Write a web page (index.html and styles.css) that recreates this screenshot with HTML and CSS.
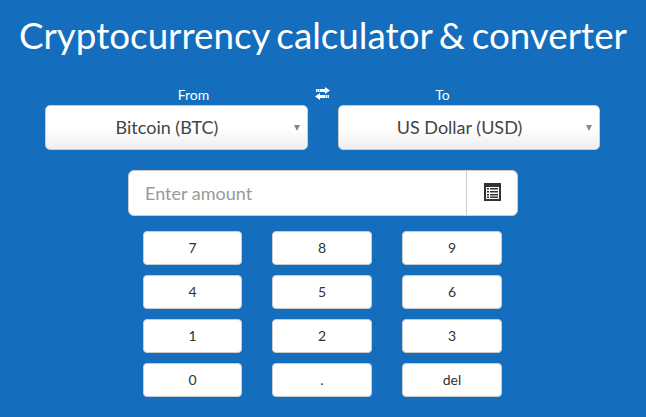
FILE: index.html
```html
<!DOCTYPE html>
<html lang="en">
<head>
<meta charset="utf-8">
<title>Cryptocurrency calculator &amp; converter</title>
<link rel="stylesheet" href="styles.css">
</head>
<body>
<main class="calculator">
  <h1 class="title">Cryptocurrency calculator &amp; converter</h1>
  <div class="labels">
    <span class="label">From</span>
    <svg class="swap" viewBox="0 0 15 13" aria-hidden="true">
      <path fill="#fff" d="M1 2H2.500V5H1zM3 2h1.500v3H3zM5 2H10V0l5 3.500L10 7V5H5zM14 8h-1.500v3H14zM12 8h-1.500v3H12zM10 8H5V6L0 9.500 5 13v-2h5z"/>
    </svg>
    <span class="label">To</span>
  </div>
  <div class="selects">
    <div class="select"><span class="currency">Bitcoin (BTC)</span><i class="arrow"></i></div>
    <div class="select"><span class="currency">US Dollar (USD)</span><i class="arrow"></i></div>
  </div>
  <div class="amount">
    <input class="amount-input" type="text" placeholder="Enter amount" aria-label="Enter amount">
    <button class="amount-toggle" aria-label="Toggle keypad">
      <svg class="list-icon" viewBox="0 0 17 18" aria-hidden="true">
        <path fill="#333" fill-rule="evenodd" d="M0 0h17v18H0zM2 4v12h13V4z"/>
        <path fill="#333" d="M3 5h2v1.500H3zM6 5h8v1.500H6zM3 8h2v1.500H3zM6 8h8v1.500H6zM3 11h2v1.500H3zM6 11h8v1.500H6zM3 13.500h2v1.500H3zM6 13.500h8v1.500H6z"/>
      </svg>
    </button>
  </div>
  <div class="keypad">
    <button class="key">7</button><button class="key">8</button><button class="key">9</button>
    <button class="key">4</button><button class="key">5</button><button class="key">6</button>
    <button class="key">1</button><button class="key">2</button><button class="key">3</button>
    <button class="key">0</button><button class="key">.</button><button class="key">del</button>
  </div>
</main>
</body>
</html>
```
FILE: styles.css
```css
* {
  box-sizing: border-box;
}

body {
  margin: 0;
  min-height: 417px;
  background: #146ebd;
  color: #fff;
  font: 14px/20px Lato, sans-serif;
}

.title {
  margin: 0;
  padding-top: 13px;
  height: 85px;
  font-size: 36.75px;
  line-height: 44px;
  word-spacing: -2.7px;
  font-weight: 400;
  text-align: center;
  white-space: nowrap;
}

.labels {
  display: grid;
  grid-template-columns: 225px 15px 225px;
  justify-content: center;
  height: 20px;
  margin-right: 2px;
}

.label {
  text-align: center;
}

.label:first-child {
  padding-right: 17px;
}

.label:last-child {
  padding-left: 1px;
}

.swap {
  width: 15px;
  height: 13px;
  margin-top: 2px;
}

.selects {
  display: grid;
  grid-template-columns: 263px 262px;
  gap: 30px;
  margin-left: 45px;
}

.select {
  display: flex;
  align-items: center;
  height: 45px;
  padding-right: 7px;
  border: 1px solid #ccc;
  border-radius: 5px;
  background: linear-gradient(#fff 50%, #eee);
  color: #444;
  font-size: 18px;
}

.currency {
  flex: 1;
  padding: 0 6px 2px 0;
  text-align: center;
}

.arrow {
  border: 3.5px solid transparent;
  border-top: 6px solid #888;
  border-bottom: 0;
}

.amount {
  display: flex;
  width: 390px;
  height: 46px;
  margin: 20px 0 15px 128px;
  border: 1px solid #ccc;
  border-radius: 6px;
  background: #fff;
}

.amount-input {
  flex: 1;
  min-width: 0;
  padding: 0 15px 0 16px;
  border: 0;
  background: none;
  font: 18px/24px Lato, sans-serif;
}

.amount-input::placeholder {
  color: #999;
}

.amount-toggle {
  display: flex;
  width: 51px;
  padding: 12px 0 0 17px;
  border: 0;
  border-left: 1px solid #ccc;
  background: none;
}

.list-icon {
  width: 17px;
  height: 18px;
}

.keypad {
  display: grid;
  grid-template-columns: 99px 100px 100px;
  grid-auto-rows: 34px;
  gap: 10px 30px;
  margin-left: 143px;
}

.key {
  padding: 0;
  border: 1px solid #ccc;
  border-radius: 4px;
  background: #fff;
  color: #333;
  font: 14px/20px Lato, sans-serif;
}
```
